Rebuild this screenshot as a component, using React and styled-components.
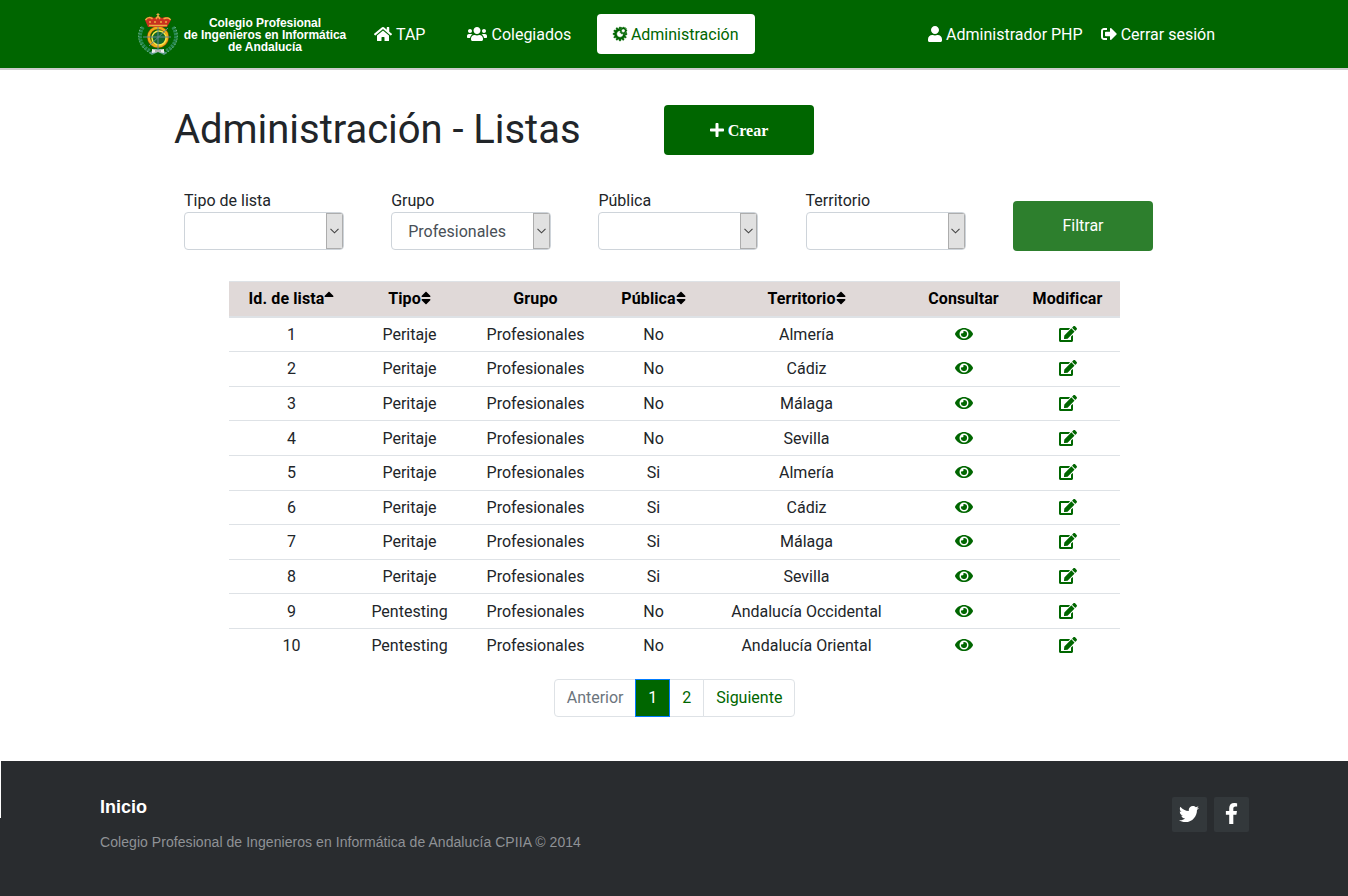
import React from 'react';
import styled, { createGlobalStyle } from 'styled-components';
import {
  FaHome, FaUsers, FaWhmcs, FaUser, FaSignOutAlt, FaPlus, FaSort, FaSortUp,
  FaEye, FaEdit, FaTwitter, FaFacebookF,
} from 'react-icons/fa';

const GREEN = '#006600';

const GlobalStyle = createGlobalStyle`
  *, *::before, *::after { box-sizing: border-box; }
  body {
    margin: 0;
    background: #fff;
    color: #212529;
    font: 400 16px/24px Roboto, sans-serif;
  }
  svg { display: inline-block; flex: none; }
`;

const Page = styled.div`
  display: flex;
  flex-direction: column;
  height: 896px;
  overflow: hidden;
`;

const Navbar = styled.header`
  display: flex;
  align-items: center;
  height: 70px;
  padding: 0 133px 0 137px;
  background: ${GREEN};
  border-bottom: 2px solid #ccc;
`;

const Brand = styled.a`
  display: flex;
  align-items: center;
  width: 221px;
  padding-top: 2px;
`;

const BrandName = styled.span`
  width: 168px;
  margin-left: 2px;
  color: #fff;
  font: 700 12px/12px "Liberation Sans", Arial, sans-serif;
  letter-spacing: -0.03px;
  text-align: center;
  white-space: nowrap;
`;

const NavLink = styled.a`
  display: flex;
  align-items: center;
  gap: ${(p) => p.$gap || 4}px;
  height: 40px;
  padding: 1px 16px 0;
  margin-right: ${(p) => p.$after || 0}px;
  border-radius: 4px;
  white-space: nowrap;
  color: ${(p) => (p.$active ? GREEN : '#fff')};
  background: ${(p) => (p.$active ? '#fff' : 'transparent')};

  svg { margin-bottom: 1px; }
`;

const ActiveLink = styled(NavLink)`
  width: 158px;
  padding: 1px 0 0 15px;

  svg { stroke: currentColor; stroke-width: 14px; }
`;

const UserMenu = styled.nav`
  display: flex;
  gap: 18px;
  margin-left: auto;
`;

const UserLink = styled(NavLink)`
  padding: 1px 0 0;
`;

const Main = styled.main`
  height: 691px;
`;

const TitleBar = styled.div`
  display: flex;
  align-items: center;
  padding: 35px 0 0 174px;
`;

const Title = styled.h1`
  width: 490px;
  margin: 0;
  font-size: 40px;
  line-height: 48px;
  font-weight: 400;
  letter-spacing: -0.04px;
`;

const Button = styled.button`
  display: flex;
  align-items: center;
  justify-content: center;
  gap: 3px;
  width: ${(p) => p.$width}px;
  height: 50px;
  padding: ${(p) => (p.$soft ? '0 0 2px' : '1px 1px 0 0')};
  border: 0;
  border-radius: 4px;
  color: #fff;
  background: ${(p) => (p.$soft ? '#2d7f2d' : GREEN)};
  font: ${(p) => (p.$soft ? '400 16px Roboto, sans-serif' : '700 16px "Liberation Serif", "Times New Roman", serif')};

  svg { margin-bottom: 2px; }
`;

const Filters = styled.div`
  display: flex;
  align-items: flex-start;
  padding: 34px 0 0 184px;
`;

const Field = styled.label`
  display: flex;
  flex-direction: column;
  width: 207.2px;

  &:nth-child(4) { width: 207.4px; }
`;

const FieldName = styled.span`
  height: 23px;
`;

const SelectBox = styled.span`
  display: flex;
  justify-content: space-between;
  width: 160px;
  height: 38px;
  border: 1px solid #ced4da;
  border-radius: 4px;
  overflow: hidden;
  color: #495057;
`;

const SelectValue = styled.span`
  padding: 7px 0 0 16px;
`;

const SelectArrow = styled.span`
  display: flex;
  align-items: center;
  justify-content: center;
  width: 17px;
  padding-right: 1px;
  border: 1px solid #adadad;
  background: #e1e1e1;
`;

const FilterAction = styled.div`
  padding-top: 12px;
`;

const Table = styled.table`
  width: 891px;
  margin: 30px 0 0 229px;
  table-layout: fixed;
  border-collapse: collapse;
  text-align: center;
`;

const HeadCell = styled.th`
  padding: 4.8px 0;
  border-top: 1px solid #dee2e6;
  border-bottom: 2px solid #dee2e6;
  background: #e0d9d8;
  color: #000;
  font-weight: 700;
  letter-spacing: 0.1px;
  white-space: nowrap;

  svg {
    width: 10px;
    height: 16px;
    vertical-align: -2px;
  }
`;

const Cell = styled.td`
  padding: 5.3px 0 4.3px;
  border-top: 1px solid #dee2e6;
  color: ${(p) => (p.$icon ? GREEN : 'inherit')};
  vertical-align: top;

  svg {
    display: block;
    margin: 2px auto 0;
  }
`;

const Pagination = styled.nav`
  display: flex;
  padding: 16px 0 0 554px;
`;

const PageItem = styled.a`
  position: relative;
  z-index: ${(p) => (p.$active ? 1 : 0)};
  padding: 8px 12px;
  margin-left: -1px;
  border: 1px solid ${(p) => (p.$active ? '#007bff' : '#dee2e6')};
  line-height: 20px;
  color: ${(p) => (p.$active ? '#fff' : p.$disabled ? '#6c757d' : GREEN)};
  background: ${(p) => (p.$active ? GREEN : '#fff')};

  &:first-child { margin-left: 0; padding: 8px 11.7px; border-radius: 4px 0 0 4px; }
  &:last-child { border-radius: 0 4px 4px 0; }
`;

const Footer = styled.footer`
  display: flex;
  justify-content: space-between;
  flex: 1;
  padding: 36px 99px 0 100px;
  background: linear-gradient(#fff, #fff) 0 0 / 1px 57px no-repeat #292c2f;
  font-family: "Liberation Sans", Arial, sans-serif;
`;

const FooterTitle = styled.p`
  margin: 0;
  color: #fff;
  font-size: 18px;
  line-height: 20px;
  font-weight: 700;
`;

const Copyright = styled.p`
  margin: 15px 0 0;
  color: #8f9296;
  font-size: 14px;
  line-height: 20px;
  letter-spacing: 0.06px;
`;

const Social = styled.div`
  display: flex;
  gap: 7px;
`;

const SocialLink = styled.a`
  display: flex;
  align-items: center;
  justify-content: center;
  width: 35px;
  height: 35px;
  padding: 0 1px 2px 0;
  border-radius: 2px;
  color: #fff;
  background: #33383b;
`;

function Crest() {
  return (
    <svg width="42" height="44" viewBox="0 0 42 44" fill="none">
      <g stroke="#2a8a55" strokeWidth="3.6" strokeDasharray="2.4 .8">
        <path d="M6 14C1 22 2 32 13 38" />
        <path d="M36 14C41 22 40 32 29 38" />
      </g>
      <g stroke="#8fc5a5" strokeWidth="1" strokeDasharray="1 2">
        <path d="M4 14C-1 23 2 34 13 40" />
        <path d="M38 14C43 23 40 34 29 40" />
      </g>
      <path d="M12 40l6-4h6l6 4-3 2-6-3-6 3z" fill="#5e9a8c" />
      <circle cx="21" cy="24" r="9.3" stroke="#7a4d10" strokeWidth="3.6" />
      <circle cx="21" cy="24" r="9.3" stroke="#f0ad16" strokeWidth="2.4" />
      <circle cx="22" cy="25" r="7" fill="#14682a" stroke="#f4e64a" strokeWidth="1.5" />
      <path d="M6 24h28M21 13v23M12 33l19-18" stroke="#5f8890" strokeWidth="1" />
      <path d="M11 14L8 7c2-4 7-4 9-2l4-2 4 2c3-2 8-1 9 2l-4 7z" fill="#c9301f" />
      <path d="M8.500 7c2-3 5-3 7-1M19 6l2-3 2 3M26.500 6c3-2 6-1 7 1M12 12.500h18M12 9h2m3 0h2m4 0h2m3 0h2" stroke="#e9b040" strokeWidth="1.5" />
      <path d="M21 0v4M19.500 1.500h3" stroke="#e6a94b" strokeWidth="1" />
      <path d="M15 36l6 1 6-1v4l-6-1-6 1z" fill="#eee" />
      <path d="M18 38h6" stroke="#777" />
    </svg>
  );
}

function Select({ label, value }) {
  return (
    <Field>
      <FieldName>{label}</FieldName>
      <SelectBox>
        <SelectValue>{value}</SelectValue>
        <SelectArrow>
          <svg width="9" height="6" viewBox="0 0 9 6" fill="none" stroke="#444" strokeWidth="1.1">
            <path d="M.5 .8l4 4 4-4" />
          </svg>
        </SelectArrow>
      </SelectBox>
    </Field>
  );
}

const columns = [
  { name: 'Id. de lista', width: 125, sort: FaSortUp },
  { name: 'Tipo', width: 111, sort: FaSort },
  { name: 'Grupo', width: 141 },
  { name: 'Pública', width: 95, sort: FaSort },
  { name: 'Territorio', width: 211, sort: FaSort },
  { name: 'Consultar', width: 103 },
  { name: 'Modificar', width: 105 },
];

const rows = [
  ['Peritaje', 'No', 'Almería'],
  ['Peritaje', 'No', 'Cádiz'],
  ['Peritaje', 'No', 'Málaga'],
  ['Peritaje', 'No', 'Sevilla'],
  ['Peritaje', 'Si', 'Almería'],
  ['Peritaje', 'Si', 'Cádiz'],
  ['Peritaje', 'Si', 'Málaga'],
  ['Peritaje', 'Si', 'Sevilla'],
  ['Pentesting', 'No', 'Andalucía Occidental'],
  ['Pentesting', 'No', 'Andalucía Oriental'],
];

export default function App() {
  return (
    <Page>
      <GlobalStyle />
      <Navbar>
        <Brand>
          <Crest />
          <BrandName>
            Colegio Profesional<br />de Ingenieros en Informática<br />de Andalucía
          </BrandName>
        </Brand>
        <NavLink $after={10}><FaHome size={18} />TAP</NavLink>
        <NavLink $after={10}><FaUsers size={20} />Colegiados</NavLink>
        <ActiveLink $active $gap={2.5}><FaWhmcs size={16} />Administración</ActiveLink>
        <UserMenu>
          <UserLink $gap={3}><FaUser size={16} />Administrador PHP</UserLink>
          <UserLink $gap={4}><FaSignOutAlt size={16} />Cerrar sesión</UserLink>
        </UserMenu>
      </Navbar>

      <Main>
        <TitleBar>
          <Title>Administración - Listas</Title>
          <Button $width={150}><FaPlus size={16} />Crear</Button>
        </TitleBar>

        <Filters>
          <Select label="Tipo de lista" />
          <Select label="Grupo" value="Profesionales" />
          <Select label="Pública" />
          <Select label="Territorio" />
          <FilterAction><Button $width={140} $soft>Filtrar</Button></FilterAction>
        </Filters>

        <Table>
          <colgroup>
            {columns.map((c) => <col key={c.name} width={c.width} />)}
          </colgroup>
          <thead>
            <tr>
              {columns.map(({ name, sort: Sort }) => (
                <HeadCell key={name}>{name}{Sort && <Sort />}</HeadCell>
              ))}
            </tr>
          </thead>
          <tbody>
            {rows.map(([tipo, publica, territorio], i) => (
              <tr key={i}>
                <Cell>{i + 1}</Cell>
                <Cell>{tipo}</Cell>
                <Cell>Profesionales</Cell>
                <Cell>{publica}</Cell>
                <Cell>{territorio}</Cell>
                <Cell $icon><FaEye size={18} /></Cell>
                <Cell $icon><FaEdit size={18} /></Cell>
              </tr>
            ))}
          </tbody>
        </Table>

        <Pagination>
          <PageItem $disabled>Anterior</PageItem>
          <PageItem $active>1</PageItem>
          <PageItem>2</PageItem>
          <PageItem>Siguiente</PageItem>
        </Pagination>
      </Main>

      <Footer>
        <div>
          <FooterTitle>Inicio</FooterTitle>
          <Copyright>Colegio Profesional de Ingenieros en Informática de Andalucía CPIIA © 2014</Copyright>
        </div>
        <Social>
          <SocialLink><FaTwitter size={20} /></SocialLink>
          <SocialLink><FaFacebookF size={21} /></SocialLink>
        </Social>
      </Footer>
    </Page>
  );
}
